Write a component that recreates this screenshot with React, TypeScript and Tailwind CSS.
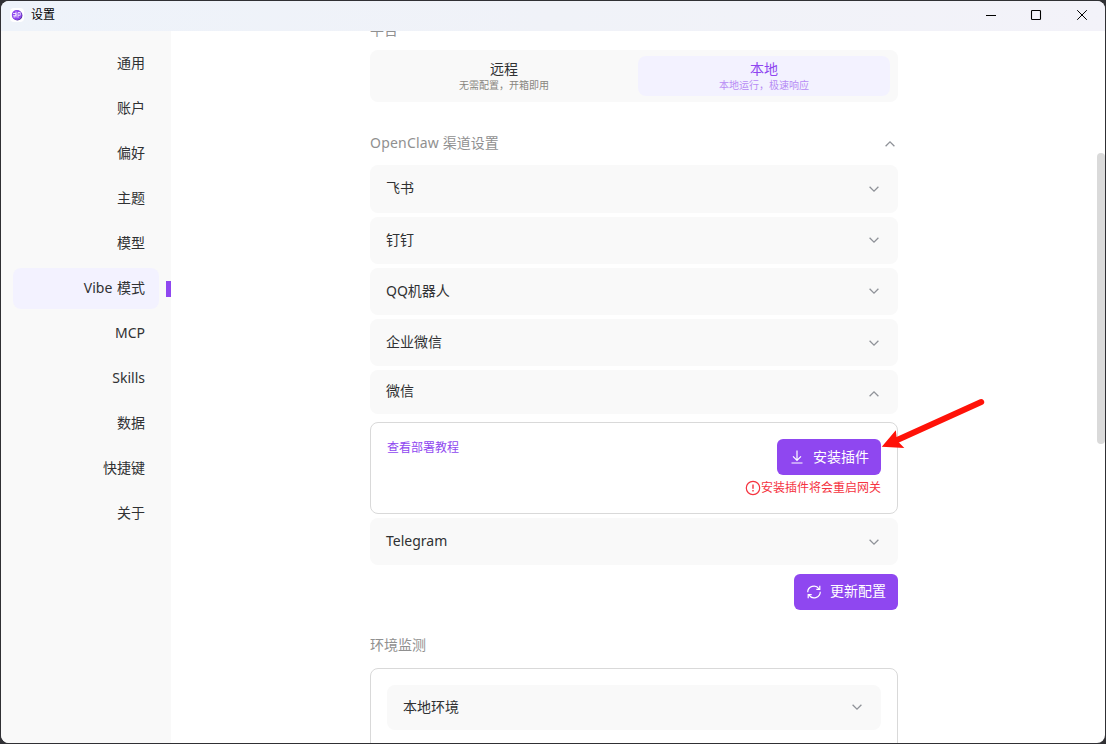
import clsx from 'clsx';

const menuItems = [
  '通用',
  '账户',
  '偏好',
  '主题',
  '模型',
  'Vibe 模式',
  'MCP',
  'Skills',
  '数据',
  '快捷键',
  '关于',
];

const channels = ['飞书', '钉钉', 'QQ机器人', '企业微信'];

function Chevron({ up = false }: { up?: boolean }) {
  return (
    <svg
      className={clsx('w-4 h-4 shrink-0 text-[#909399]', up && 'rotate-180')}
      fill="none"
      stroke="currentColor"
      viewBox="0 0 16 16"
    >
      <path strokeWidth={1.3} d="M3.6 5.8 8 10.2l4.4-4.4" />
    </svg>
  );
}

function ChannelRow({ name }: { name: string }) {
  return (
    <div className="flex h-[47.2px] items-center justify-between rounded-lg bg-[#f9f9f9] px-4">
      <span className="-mt-[1.2px]">{name}</span>
      <Chevron />
    </div>
  );
}

function TitleBar() {
  return (
    <header className="flex h-[30px] shrink-0 items-center bg-linear-to-r from-[#eef3fa] via-[#f0f2f8] to-[#f3f2f9] text-black">
      <svg className="ml-[9px] h-3.5 w-3.5 -mt-0.5" viewBox="0 0 14 14">
        <rect width="14" height="14" rx="4" fill="#fff" />
        <circle cx="7.4" cy="7.5" r="5" fill="#4b2b96" />
        <circle cx="6.8" cy="7" r="5" fill="#8f47f0" />
        <path
          d="M3 5.5h3v2.2H3.2M6 3.5v6M8 9.8V4.5h2.2v2.8H8M4.2 7.7v2"
          fill="none"
          stroke="#fff"
          strokeWidth="0.8"
        />
      </svg>
      <span className="ml-[7px] text-[12px] leading-none -mt-0.5">设置</span>
      <div className="ml-auto mr-[17px] -mt-0.5 flex items-center">
        <svg className="mr-[33px] h-3 w-3" viewBox="0 0 12 12" stroke="currentColor" fill="none">
          <path d="M1 6.5h10" />
        </svg>
        <svg className="mr-[34px] h-3 w-3" viewBox="0 0 12 12" stroke="currentColor" fill="none">
          <rect x="1.5" y="1.5" width="9" height="9" rx="0.8" strokeWidth="1.1" />
        </svg>
        <svg className="h-3 w-3" viewBox="0 0 12 12" stroke="currentColor" fill="none">
          <path d="m1.2 1.2 9.6 9.6M10.8 1.2l-9.6 9.6" />
        </svg>
      </div>
    </header>
  );
}

function Sidebar() {
  return (
    <nav className="flex w-[170px] shrink-0 flex-col gap-1 bg-[#f9f9f9] pt-3 pl-3">
      {menuItems.map((item) => {
        const active = item === 'Vibe 模式';
        return (
          <div key={item} className="flex items-center justify-between">
            <div
              className={clsx(
                'flex h-[41px] w-[146px] items-center justify-end rounded-lg pr-3.5',
                active && 'bg-[#f3f2ff]'
              )}
            >
              <span className={clsx('-mt-0.5', active && '[word-spacing:1px]')}>{item}</span>
            </div>
            {active && <div className="h-4 w-[5px] bg-[#8f47f0]" />}
          </div>
        );
      })}
    </nav>
  );
}

export default function App() {
  return (
    <div className="relative h-[744px] w-[1106px] overflow-hidden bg-[#303034] p-px font-['Noto_Sans','Noto_Sans_CJK_SC',sans-serif] text-[14px] leading-5 text-[#303133]">
      <div className="flex h-full flex-col overflow-hidden rounded-lg bg-white">
        <TitleBar />

        <div className="flex min-h-0 flex-1">
          <Sidebar />

          <main className="flex-1 overflow-hidden pl-[199px]">
            <div className="w-[528px]">
              {/* Platform */}
              <h2 className="-mt-[11px] h-[30px] text-[#909090]">平台</h2>
              <div className="flex h-[52px] items-center gap-2 rounded-lg bg-[#f9f9f9] px-2">
                <div className="flex h-10 flex-1 flex-col items-center pt-[3px]">
                  <span className="leading-5">远程</span>
                  <span className="text-[10px] leading-3 text-[#888680]">
                    无需配置，开箱即用
                  </span>
                </div>
                <div className="flex h-10 flex-1 flex-col items-center rounded-lg bg-[#f3f2ff] pt-[3px] text-[#8f47f0]">
                  <span className="leading-5">本地</span>
                  <span className="text-[10px] leading-3 text-[#b78cf5]">
                    本地运行，极速响应
                  </span>
                </div>
              </div>

              {/* Channels */}
              <div className="mt-8 mb-[12.4px] flex h-[19px] items-center justify-between text-[#909090]">
                <h2 className="-mt-0.5">
                  <span className="tracking-[0.2px]">OpenClaw </span>渠道设置
                </h2>
                <div className="pt-px">
                  <Chevron up />
                </div>
              </div>
              <div className="flex flex-col gap-1">
                {channels.map((name) => (
                  <ChannelRow key={name} name={name} />
                ))}
                <div className="flex h-11 items-center justify-between rounded-lg bg-[#f9f9f9] px-4">
                  <span className="-mt-[3px]">微信</span>
                  <div className="pt-[3px]">
                    <Chevron up />
                  </div>
                </div>
                <div className="mt-1 flex h-[92px] justify-between rounded-lg border border-[#d9d9d9] p-4">
                  <a className="mt-px text-[12px] leading-4 text-[#8f47f0]">查看部署教程</a>
                  <div className="flex flex-col items-end">
                    <button className="flex h-9 w-[104px] items-center rounded-md bg-[#8f47f0] pl-3 text-white">
                      <svg className="h-4 w-4" viewBox="0 0 16 16" fill="none" stroke="currentColor">
                        <path strokeWidth={1.2} d="M8 1.5v9.5M4 7.3l4 4 4-4M2.5 14h11" />
                      </svg>
                      <span className="ml-2">安装插件</span>
                    </button>
                    <div className="mt-1 flex h-[18px] items-center text-[12px] leading-4 text-[#f5333f]">
                      <svg className="h-4 w-4" viewBox="0 0 16 16" fill="none" stroke="currentColor">
                        <circle cx="8" cy="8" r="6.7" strokeWidth="1.2" />
                        <path strokeWidth={1.4} d="M8 4.5v4.3M8 10v1.5" />
                      </svg>
                      <span>安装插件将会重启网关</span>
                    </div>
                  </div>
                </div>
                <ChannelRow name="Telegram" />
              </div>
              <div className="mt-[8.6px] flex justify-end">
                <button className="flex h-9 w-[104px] items-center rounded-md bg-[#8f47f0] pl-3 text-white">
                  <svg
                    className="h-4 w-4"
                    viewBox="0 0 16 16"
                    fill="none"
                    stroke="currentColor"
                    strokeWidth={1.2}
                  >
                    <path d="M1.7 8.2A6.2 6.2 0 0 1 13 4.8M14.3 7.8A6.2 6.2 0 0 1 3 11.2" />
                    <path d="M13.8 1.8v3.5h-3.5M2.2 14.2v-3.5h3.5" />
                  </svg>
                  <span className="ml-2 -mt-0.5">更新配置</span>
                </button>
              </div>

              {/* Environment */}
              <h2 className="mt-[25px] mb-[13px] text-[#909090]">环境监测</h2>
              <div className="h-32 rounded-lg border border-[#d9d9d9] p-4">
                <div className="flex h-[45px] items-center justify-between rounded-lg bg-[#f9f9f9] px-4">
                  <span className="-mt-px">本地环境</span>
                  <Chevron />
                </div>
              </div>
            </div>
          </main>

          {/* Scrollbar */}
          <div className="w-2 shrink-0 pt-[122px]">
            <div className="h-[291px] rounded-full bg-[#dadada]" />
          </div>
        </div>
      </div>

      {/* Pointer arrow */}
      <svg
        className="absolute top-[390px] left-[875px] h-[70px] w-[120px]"
        viewBox="875 390 120 70"
        fill="#ff1208"
      >
        <path d="M895 441 981.2 402" stroke="#ff1208" strokeWidth="6" strokeLinecap="round" />
        <path d="M881.8 446.8 895.8 430.2 897 440.5 904.3 448Z" />
      </svg>
    </div>
  );
}
